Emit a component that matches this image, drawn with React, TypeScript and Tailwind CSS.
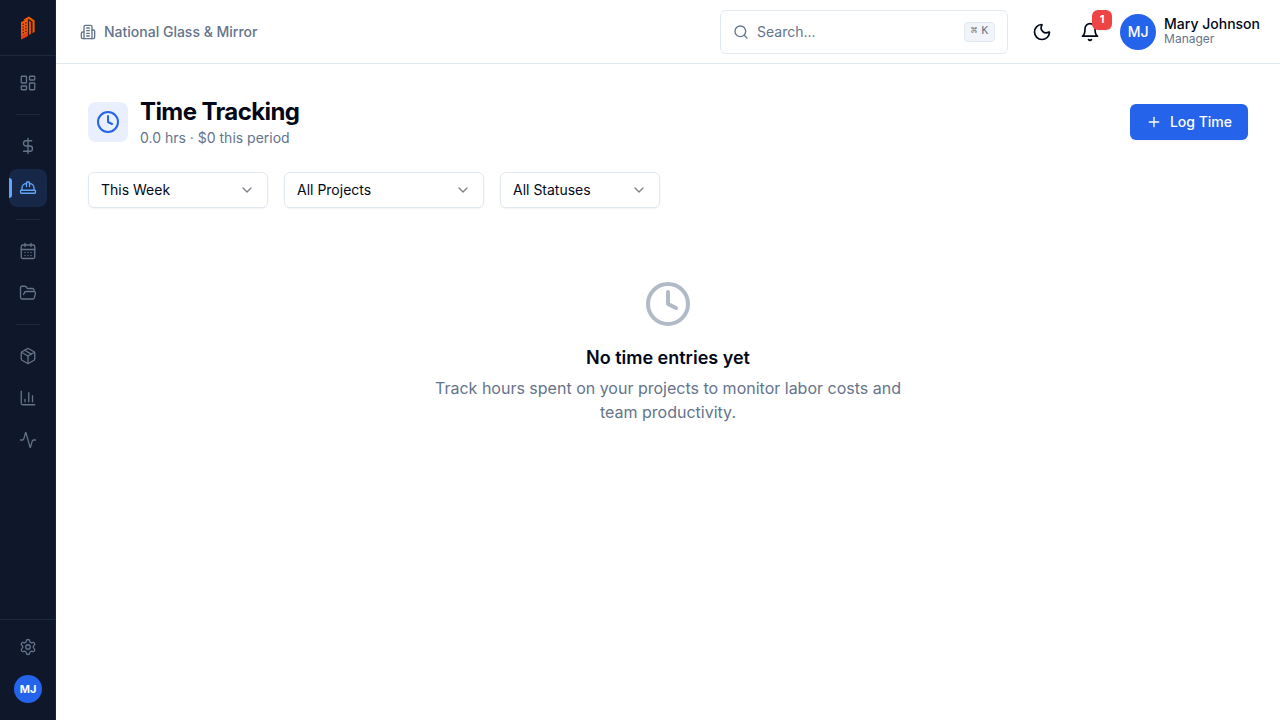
import { useState } from "react";
import {
  Activity,
  CalendarDays,
  ChartColumn,
  ChevronDown,
  Clock,
  DollarSign,
  FolderOpen,
  HardHat,
  LayoutDashboard,
  type LucideIcon,
  Moon,
  Package,
  Plus,
  Search,
  Settings
} from "lucide-react";

type NavItem = { label: string; icon: LucideIcon; active?: boolean };

const navGroups: NavItem[][] = [
  [{ label: "Dashboard", icon: LayoutDashboard }],
  [
    { label: "Financials", icon: DollarSign },
    { label: "Field", icon: HardHat, active: true }
  ],
  [
    { label: "Calendar", icon: CalendarDays },
    { label: "Files", icon: FolderOpen }
  ],
  [
    { label: "Inventory", icon: Package },
    { label: "Reports", icon: ChartColumn },
    { label: "Activity", icon: Activity }
  ]
];

function Logo() {
  return (
    <svg viewBox="0 0 16 24" className="h-6 w-4" aria-hidden="true">
      <path d="M1 6.2 8 2.6V20L1 23.6Z" fill="#f15a04" />
      <path d="M1 19.5 8 16v4L1 23.6Z" fill="#dc2626" opacity="0.6" />
      <path d="M3.5 3.4 9 0.4l5.6 4V16l-2.2 1.2V5.6L9 3.2 5 4.6Z" fill="#f15a04" />
      <path d="M8.9 4.6 11.2 6v11.8l-2.3 1.2Z" fill="#d94f08" />
      <path d="M8.4 3v16.8M11.8 5.6v12" stroke="#431407" strokeWidth="0.6" />
      <path
        d="M2.6 8.6l1.4-.7M5.2 7.3l1.4-.7M2.6 11.4l1.4-.7M5.2 10.1l1.4-.7M2.6 14.2l1.4-.7M5.2 12.9l1.4-.7M2.6 17l1.4-.7M5.2 15.7l1.4-.7"
        stroke="#431407"
        strokeWidth="1.1"
      />
    </svg>
  );
}

function OfficeIcon() {
  return (
    <svg
      viewBox="0 0 24 24"
      fill="none"
      stroke="currentColor"
      strokeWidth="2"
      strokeLinecap="round"
      strokeLinejoin="round"
      className="size-4"
      aria-hidden="true"
    >
      <path d="M6 22V4a2 2 0 0 1 2-2h8a2 2 0 0 1 2 2v18Z" />
      <path d="M6 12H4a2 2 0 0 0-2 2v6a2 2 0 0 0 2 2h2" />
      <path d="M18 9h2a2 2 0 0 1 2 2v9a2 2 0 0 1-2 2h-2" />
      <path d="M10 6h4M10 10h4M10 14h4M10 18h4" />
    </svg>
  );
}

function BellIcon() {
  return (
    <svg
      viewBox="0 0 24 24"
      fill="none"
      stroke="currentColor"
      strokeWidth="2"
      strokeLinecap="round"
      strokeLinejoin="round"
      className="size-5"
      aria-hidden="true"
    >
      <path d="M6 8a6 6 0 0 1 12 0c0 7 3 9 3 9H3s3-2 3-9" />
      <path d="M10.3 21a1.94 1.94 0 0 0 3.4 0" />
    </svg>
  );
}

function NavLink({ label, icon: Icon, active }: NavItem) {
  return (
    <a
      href="#"
      aria-label={label}
      aria-current={active ? "page" : undefined}
      className={`relative flex size-[38px] items-center justify-center rounded-lg ${
        active ? "bg-[#172747] text-[#60a5fa]" : "text-[#64748b] hover:text-[#cbd5e1]"
      }`}
    >
      {active ? <span className="absolute left-0 h-5 w-[3px] rounded-r-full bg-[#60a5fa]" /> : null}
      <Icon size={18} strokeWidth={1.75} />
    </a>
  );
}

function Sidebar() {
  return (
    <aside className="sticky top-0 flex h-screen w-14 shrink-0 flex-col bg-[#0f172a] shadow-[inset_-1px_0_0_#1a2436]">
      <div className="flex h-14 items-center justify-center border-b border-[#1e293b]">
        <Logo />
      </div>
      <nav className="flex flex-1 flex-col items-center pt-2">
        {navGroups.map((group, i) => (
          <div key={i} className="flex flex-col items-center">
            {i > 0 ? <div className="my-3 h-px w-6 bg-[#1e293b]" /> : null}
            <div className="flex flex-col gap-1">
              {group.map((item) => (
                <NavLink key={item.label} {...item} />
              ))}
            </div>
          </div>
        ))}
      </nav>
      <div className="flex flex-col items-center gap-1 border-t border-[#1e293b] pt-2 pb-3">
        <NavLink label="Settings" icon={Settings} />
        <button type="button" aria-label="Account" className="flex size-[38px] items-center justify-center">
          <span className="flex size-7 items-center justify-center rounded-full bg-[#2563eb] text-[11px] font-bold text-white">
            MJ
          </span>
        </button>
      </div>
    </aside>
  );
}

function Header() {
  return (
    <header className="flex h-16 items-center justify-between border-b border-[#e2e8f0] pr-5 pl-6">
      <div className="flex items-center gap-2 text-sm font-medium text-[#64748b]">
        <OfficeIcon />
        <span>National Glass &amp; Mirror</span>
      </div>
      <div className="flex items-center">
        <div className="relative mr-3 w-72">
          <Search size={16} className="absolute top-3.5 left-[13px] text-[#64748b]" />
          <input
            type="search"
            aria-label="Search"
            placeholder="Search..."
            className="h-11 w-full rounded-md border border-[#e2e8f0] bg-white pr-12 pl-9 text-sm outline-none placeholder:text-[#64748b] focus:border-[#2563eb]"
          />
          <kbd className="absolute top-3 right-[13px] flex h-5 items-center gap-1 rounded border border-[#e2e8f0] bg-[#f1f5f9] px-1.5 font-['DejaVu_Sans_Mono',monospace] text-[11px] font-medium text-[#64748b]">
            <span>⌘</span>
            <span>K</span>
          </kbd>
        </div>
        <button type="button" aria-label="Toggle theme" className="flex size-11 items-center justify-center rounded-md">
          <Moon size={20} />
        </button>
        <button
          type="button"
          aria-label="Notifications"
          className="relative ml-1 flex size-11 items-center justify-center rounded-md"
        >
          <BellIcon />
          <span className="absolute top-0 right-0 flex size-5 items-center justify-center rounded-md bg-[#ef4444] text-[11px] font-bold text-white shadow-xs">
            1
          </span>
        </button>
        <button type="button" className="ml-2 flex items-center gap-2 text-left">
          <span className="flex size-9 items-center justify-center rounded-full bg-[#2563eb] text-sm font-medium text-white">
            MJ
          </span>
          <span className="flex flex-col">
            <span className="text-sm leading-none font-medium">Mary Johnson</span>
            <span className="text-xs leading-4 text-[#64748b]">Manager</span>
          </span>
        </button>
      </div>
    </header>
  );
}

function FilterSelect({ label, options, className }: { label: string; options: string[]; className: string }) {
  const [value, setValue] = useState(options[0]);
  return (
    <div className={`relative ${className}`}>
      <select
        aria-label={label}
        value={value}
        onChange={(e) => setValue(e.target.value)}
        className="h-9 w-full appearance-none rounded-md border border-[#e2e8f0] bg-white pr-8 pl-3 text-sm shadow-xs outline-none focus:border-[#2563eb]"
      >
        {options.map((option) => (
          <option key={option}>{option}</option>
        ))}
      </select>
      <ChevronDown size={16} className="pointer-events-none absolute top-2.5 right-[13px] opacity-50" />
    </div>
  );
}

export default function App() {
  return (
    <div className="flex min-h-screen bg-white font-['Inter',sans-serif] text-[#020817]">
      <Sidebar />
      <div className="min-w-0 flex-1">
        <Header />
        <main className="p-8">
          <div className="flex items-center justify-between">
            <div className="flex items-center gap-3">
              <div className="flex size-10 items-center justify-center rounded-lg bg-[#e9effd] text-[#2563eb]">
                <Clock size={24} />
              </div>
              <div>
                <h1 className="text-2xl font-bold tracking-tight">Time Tracking</h1>
                <p className="text-sm text-[#64748b]">0.0 hrs · $0 this period</p>
              </div>
            </div>
            <button
              type="button"
              className="flex h-9 items-center gap-2 rounded-md bg-[#2563eb] px-4 text-sm font-medium text-white shadow-xs hover:bg-[#1d4ed8]"
            >
              <Plus size={16} />
              Log Time
            </button>
          </div>

          <div className="mt-6 flex flex-wrap gap-4">
            <FilterSelect label="Period" options={["This Week", "Last Week", "This Month"]} className="w-[180px]" />
            <FilterSelect label="Project" options={["All Projects"]} className="w-[200px]" />
            <FilterSelect label="Status" options={["All Statuses", "Pending", "Approved"]} className="w-40" />
          </div>

          <div className="flex flex-col items-center pt-18 text-center">
            <Clock size={48} className="text-[#b1bac7]" />
            <h2 className="mt-4 text-lg font-semibold">No time entries yet</h2>
            <p className="mt-1 max-w-[480px] text-base text-[#64748b]">
              Track hours spent on your projects to monitor labor costs and team productivity.
            </p>
          </div>
        </main>
      </div>
    </div>
  );
}
